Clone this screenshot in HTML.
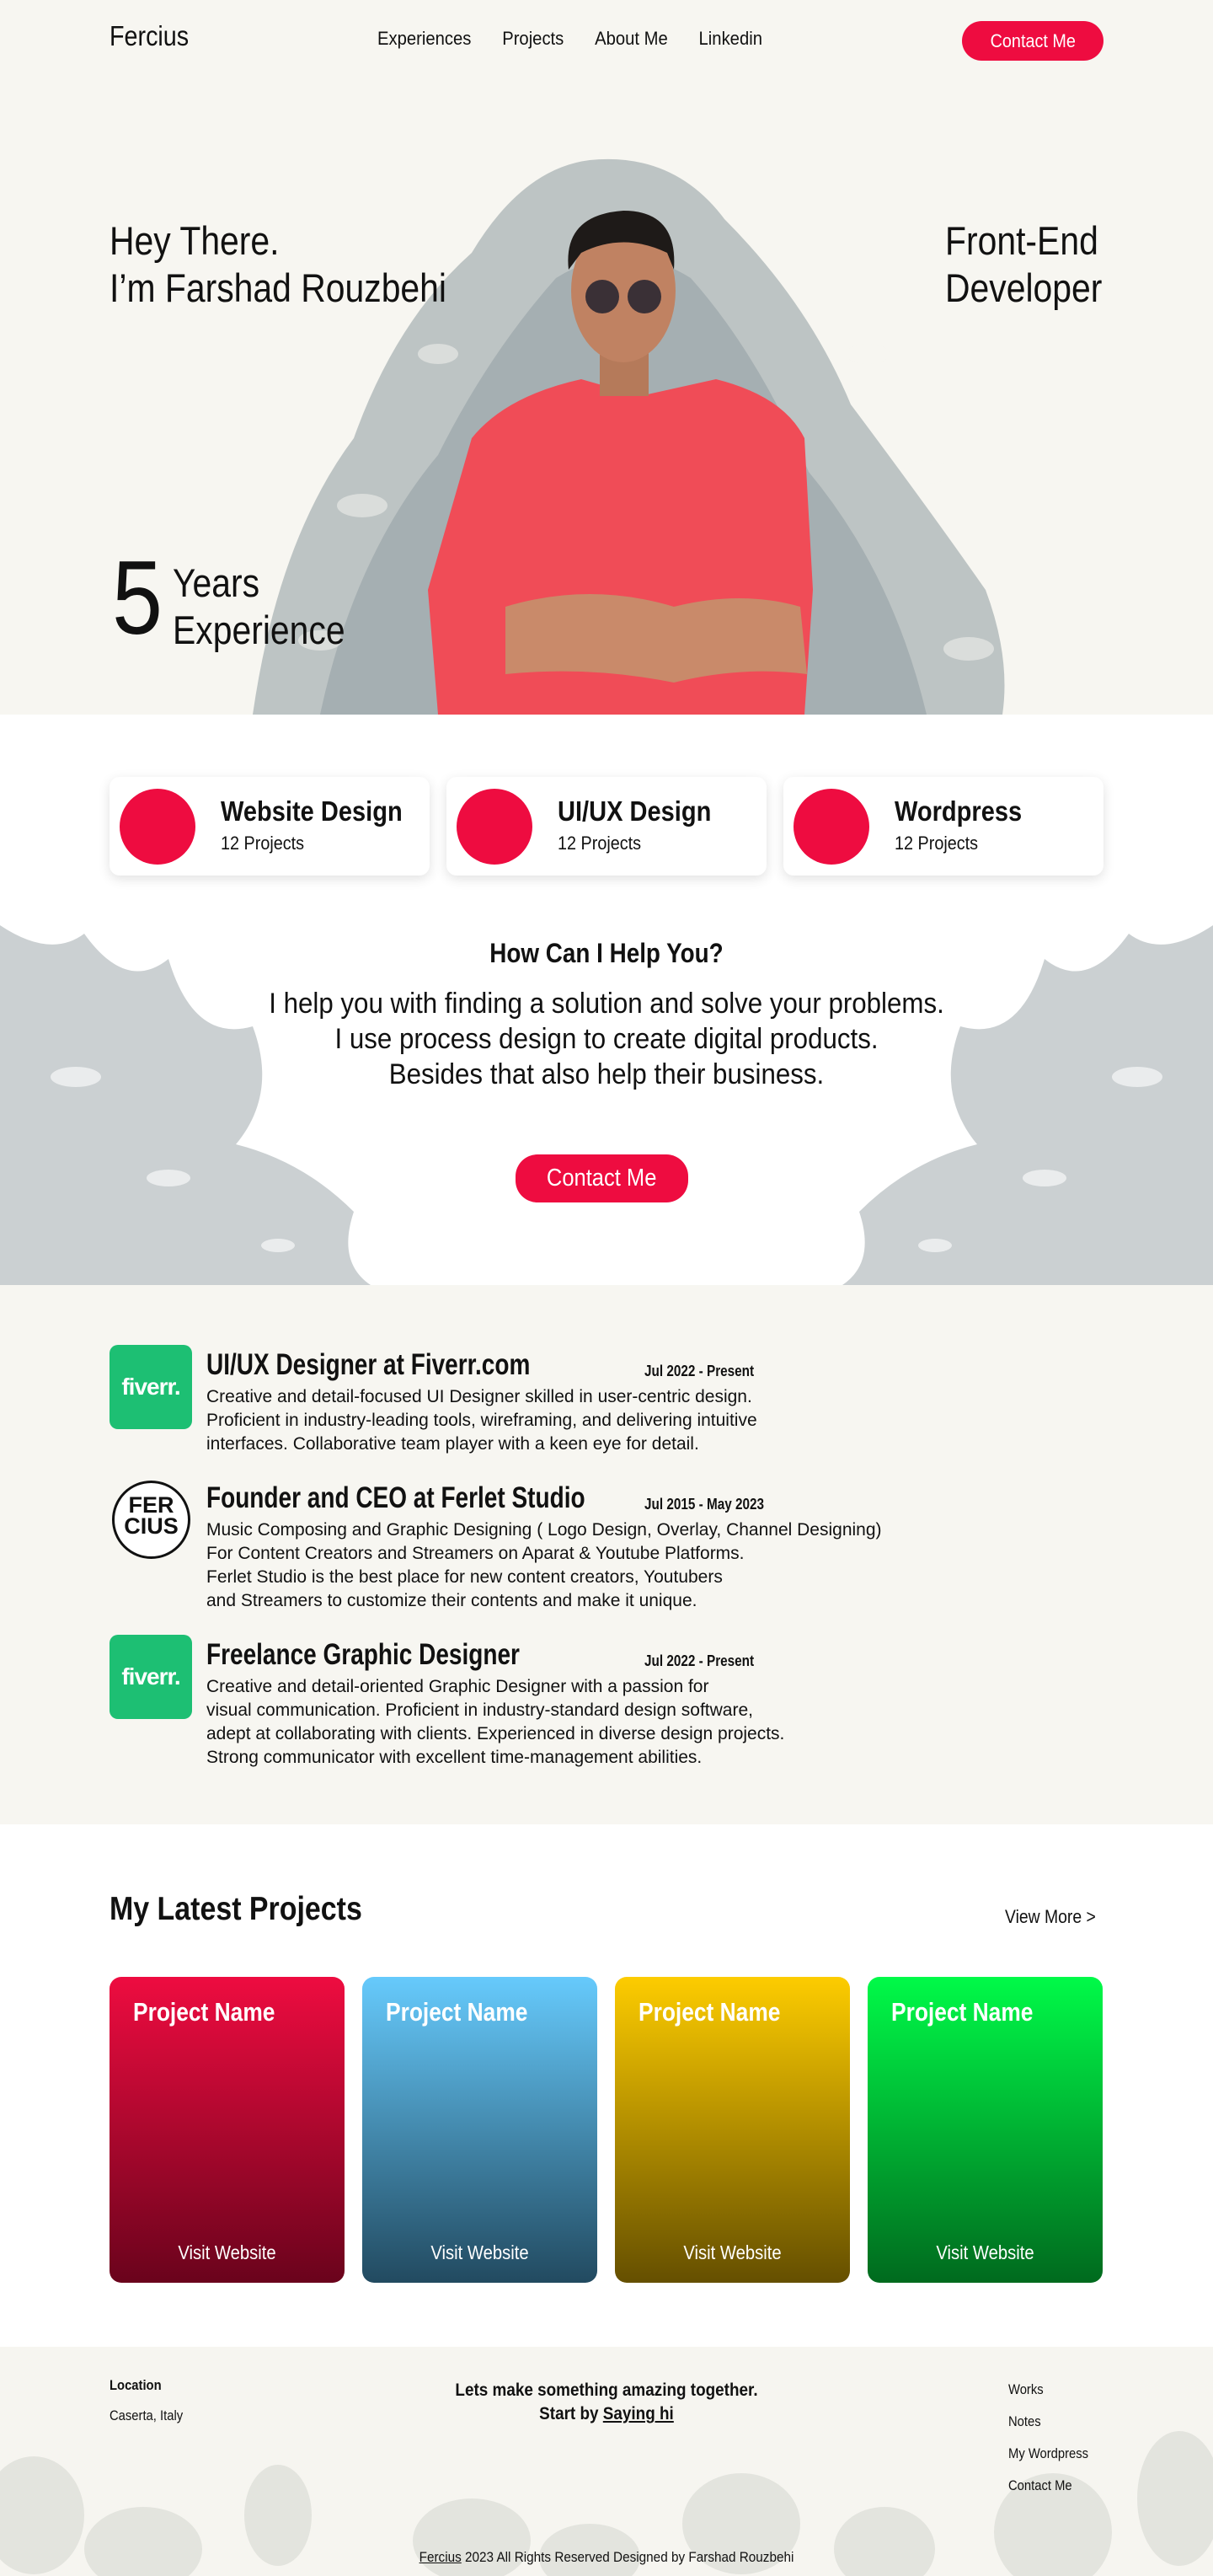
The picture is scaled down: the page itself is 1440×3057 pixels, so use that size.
<!DOCTYPE html>
<html><head><meta charset="utf-8">
<style>
*{margin:0;padding:0;box-sizing:border-box}
body{width:1440px;height:3057px;font-family:"Liberation Sans Narrow","Liberation Sans",sans-serif;color:#111;background:#fff;position:relative;overflow:hidden}
.abs{position:absolute}
.sx{transform:scaleX(.87);transform-origin:left top}
.hero{position:absolute;left:0;top:0;width:1440px;height:848px;background:#f7f6f1;overflow:hidden}
.btn{background:#ee0c40;color:#fff;border-radius:26px;display:flex;align-items:center;justify-content:center}
.card{position:absolute;top:922px;width:380px;height:117px;background:#fff;border-radius:12px;box-shadow:0 4px 14px rgba(0,0,0,.12)}
.card .c{position:absolute;left:12px;top:14px;width:90px;height:90px;border-radius:50%;background:#ee0c40}
.card .t{position:absolute;left:132px;top:22px;font-size:33px;font-weight:bold;transform:scaleX(.88);transform-origin:left top;white-space:nowrap}
.card .s{position:absolute;left:132px;top:66px;font-size:22px;transform:scaleX(.9);transform-origin:left top}
.exp{position:absolute;left:0;top:1525px;width:1440px;height:640px;background:#f7f6f1}
.logo{position:absolute;left:130px;width:98px;height:100px;background:#1dbf73;border-radius:10px;color:#fff;font-weight:bold;font-size:28px;display:flex;align-items:center;justify-content:center;letter-spacing:-1px}
.et{position:absolute;left:245px;font-size:35px;font-weight:bold;transform:scaleX(.8);transform-origin:left top;white-space:nowrap}
.ed{position:absolute;left:765px;font-size:18px;font-weight:bold;transform:scaleX(.85);transform-origin:left top;white-space:nowrap}
.ep{position:absolute;left:245px;font-size:21px;line-height:28px;white-space:nowrap}
.pc{position:absolute;top:2346px;width:279px;height:363px;border-radius:14px;color:#fff}
.pc .n{position:absolute;left:28px;top:24px;font-size:31px;font-weight:bold;transform:scaleX(.85);transform-origin:left top;white-space:nowrap}
.pc .v{position:absolute;left:0;right:0;bottom:22px;text-align:center;font-size:23px;transform:scaleX(.88)}
.foot{position:absolute;left:0;top:2785px;width:1440px;height:272px;background:#f6f5f0;overflow:hidden}
</style></head><body>
<div class="hero">
<svg class="abs" style="left:0;top:0" width="1440" height="848">
<g fill="#8e9a9f">
<path d="M300 848 Q330 640 420 520 Q470 380 560 300 Q620 200 700 190 Q800 180 860 260 Q960 360 1010 480 Q1100 600 1170 700 Q1200 780 1190 848 Z" opacity=".55"/>
<path d="M380 848 Q420 660 520 540 Q580 420 660 330 Q740 280 820 330 Q900 420 960 560 Q1060 680 1100 848 Z" opacity=".5"/>
</g>
<g fill="#f7f6f1" opacity=".5">
<ellipse cx="430" cy="600" rx="30" ry="14"/><ellipse cx="1100" cy="560" rx="28" ry="14"/><ellipse cx="520" cy="420" rx="24" ry="12"/><ellipse cx="1030" cy="420" rx="26" ry="12"/><ellipse cx="380" cy="760" rx="26" ry="12"/><ellipse cx="1150" cy="770" rx="30" ry="14"/>
</g>
<path d="M560 520 Q600 470 690 450 L760 470 L850 450 Q930 470 955 520 L965 700 L955 848 L520 848 L508 700 Z" fill="#f04c57"/>
<path d="M600 720 Q700 690 800 720 Q880 700 950 720 L958 800 Q880 790 800 810 Q700 790 600 800 Z" fill="#c98a6a"/>
<rect x="712" y="400" width="58" height="70" fill="#b57a5a"/>
<ellipse cx="740" cy="345" rx="62" ry="85" fill="#c08262"/>
<path d="M675 320 Q668 255 740 250 Q805 250 800 320 L792 300 Q740 275 690 300 Z" fill="#1e1a18"/>
<circle cx="715" cy="352" r="20" fill="#3a3036"/><circle cx="765" cy="352" r="20" fill="#3a3036"/>
</svg>
<div class="abs sx" style="left:130px;top:24px;font-size:33px">Fercius</div>
<div class="abs" style="left:448px;top:33px;font-size:22px;display:flex;gap:40px;transform:scaleX(.92);transform-origin:left top"><span>Experiences</span><span>Projects</span><span>About Me</span><span>Linkedin</span></div>
<div class="abs btn" style="left:1142px;top:25px;width:168px;height:47px;font-size:22px"><span style="transform:scaleX(.9)">Contact Me</span></div>
<div class="abs sx" style="left:130px;top:258px;font-size:47px;line-height:56px;white-space:nowrap">Hey There.<br>I’m Farshad Rouzbehi</div>
<div class="abs sx" style="left:1122px;top:258px;font-size:47px;line-height:56px;white-space:nowrap">Front-End<br>Developer</div>
<div class="abs sx" style="left:133px;top:645px;font-size:124px;line-height:130px">5</div>
<div class="abs sx" style="left:205px;top:664px;font-size:47px;line-height:56px">Years<br>Experience</div>
</div>

<div class="card" style="left:130px"><div class="c"></div><div class="t">Website Design</div><div class="s">12 Projects</div></div>
<div class="card" style="left:530px"><div class="c"></div><div class="t">UI/UX Design</div><div class="s">12 Projects</div></div>
<div class="card" style="left:930px"><div class="c"></div><div class="t">Wordpress</div><div class="s">12 Projects</div></div>

<svg class="abs" style="left:0;top:1078px" width="1440" height="447">
<g fill="#cbd0d2">
<path d="M0 20 Q60 60 100 30 Q150 100 200 60 Q230 160 300 140 Q330 220 280 280 Q360 300 420 360 Q400 420 440 447 L0 447 Z"/>
<path d="M1440 20 Q1380 60 1340 30 Q1290 100 1240 60 Q1210 160 1140 140 Q1110 220 1160 280 Q1080 300 1020 360 Q1040 420 1000 447 L1440 447 Z"/>
</g>
<g fill="#fff" opacity=".6">
<ellipse cx="90" cy="200" rx="30" ry="12"/><ellipse cx="200" cy="320" rx="26" ry="10"/><ellipse cx="330" cy="400" rx="20" ry="8"/><ellipse cx="1350" cy="200" rx="30" ry="12"/><ellipse cx="1240" cy="320" rx="26" ry="10"/><ellipse cx="1110" cy="400" rx="20" ry="8"/>
</g></svg>
<div class="abs" style="left:0;width:1440px;top:1113px;text-align:center;font-size:32px;font-weight:bold;transform:scaleX(.87)">How Can I Help You?</div>
<div class="abs" style="left:0;width:1440px;top:1170px;text-align:center;font-size:34px;line-height:42px;transform:scaleX(.92)">I help you with finding a solution and solve your problems.<br>I use process design to create digital products.<br>Besides that also help their business.</div>
<div class="abs btn" style="left:612px;top:1370px;width:205px;height:57px;font-size:29px"><span style="transform:scaleX(.88)">Contact Me</span></div>

<div class="exp">
<div class="logo" style="top:71px">fiverr.</div>
<div class="et" style="top:75px">UI/UX Designer at Fiverr.com</div>
<div class="ed" style="top:92px">Jul 2022 - Present</div>
<div class="ep" style="top:119px">Creative and detail-focused UI Designer skilled in user-centric design.<br>Proficient in industry-leading tools, wireframing, and delivering intuitive<br>interfaces. Collaborative team player with a keen eye for detail.</div>
<div class="abs" style="left:133px;top:232px;width:93px;height:93px;border:3px solid #111;border-radius:50%;background:#fff;text-align:center;font-weight:bold;font-size:27px;line-height:25px;padding-top:14px">FER<br>CIUS</div>
<div class="et" style="top:233px">Founder and CEO at Ferlet Studio</div>
<div class="ed" style="top:250px">Jul 2015 - May 2023</div>
<div class="ep" style="top:277px">Music Composing and Graphic Designing ( Logo Design, Overlay, Channel Designing)<br>For Content Creators and Streamers on Aparat &amp; Youtube Platforms.<br>Ferlet Studio is the best place for new content creators, Youtubers<br>and Streamers to customize their contents and make it unique.</div>
<div class="logo" style="top:415px">fiverr.</div>
<div class="et" style="top:419px">Freelance Graphic Designer</div>
<div class="ed" style="top:436px">Jul 2022 - Present</div>
<div class="ep" style="top:463px">Creative and detail-oriented Graphic Designer with a passion for<br>visual communication. Proficient in industry-standard design software,<br>adept at collaborating with clients. Experienced in diverse design projects.<br>Strong communicator with excellent time-management abilities.</div>
</div>

<div class="abs sx" style="left:130px;top:2244px;font-size:39px;font-weight:bold">My Latest Projects</div>
<div class="abs" style="left:1193px;top:2262px;font-size:22px;transform:scaleX(.88);transform-origin:left top;white-space:nowrap">View More &gt;</div>
<div class="pc" style="left:130px;background:linear-gradient(#ee0c40,#6a031c)"><div class="n">Project Name</div><div class="v">Visit Website</div></div>
<div class="pc" style="left:430px;background:linear-gradient(#66cafc,#224a60)"><div class="n">Project Name</div><div class="v">Visit Website</div></div>
<div class="pc" style="left:730px;background:linear-gradient(#fdcc00,#654f00)"><div class="n">Project Name</div><div class="v">Visit Website</div></div>
<div class="pc" style="left:1030px;background:linear-gradient(#00fa48,#006a1e)"><div class="n">Project Name</div><div class="v">Visit Website</div></div>

<div class="foot">
<svg class="abs" style="left:0;top:0" width="1440" height="272"><g fill="#e3e4de">
<ellipse cx="40" cy="200" rx="60" ry="70"/><ellipse cx="170" cy="240" rx="70" ry="50"/><ellipse cx="330" cy="200" rx="40" ry="60"/><ellipse cx="560" cy="230" rx="70" ry="50"/><ellipse cx="700" cy="250" rx="60" ry="40"/><ellipse cx="880" cy="210" rx="70" ry="60"/><ellipse cx="1050" cy="240" rx="60" ry="50"/><ellipse cx="1250" cy="220" rx="70" ry="70"/><ellipse cx="1400" cy="180" rx="50" ry="80"/></g></svg>
<div class="abs sx" style="left:130px;top:36px;font-size:17px;font-weight:bold">Location</div>
<div class="abs sx" style="left:130px;top:72px;font-size:17px">Caserta, Italy</div>
<div class="abs" style="left:0;width:1440px;top:38px;text-align:center;font-size:21px;font-weight:bold;line-height:28px;transform:scaleX(.9)">Lets make something amazing together.<br>Start by <u>Saying hi</u></div>
<div class="abs sx" style="left:1197px;top:32px;font-size:17px;line-height:38px">Works<br>Notes<br>My Wordpress<br>Contact Me</div>
<div class="abs" style="left:0;width:1440px;top:240px;text-align:center;font-size:17px;transform:scaleX(.9)"><u>Fercius</u> 2023 All Rights Reserved Designed by Farshad Rouzbehi</div>
</div>
</body></html>
